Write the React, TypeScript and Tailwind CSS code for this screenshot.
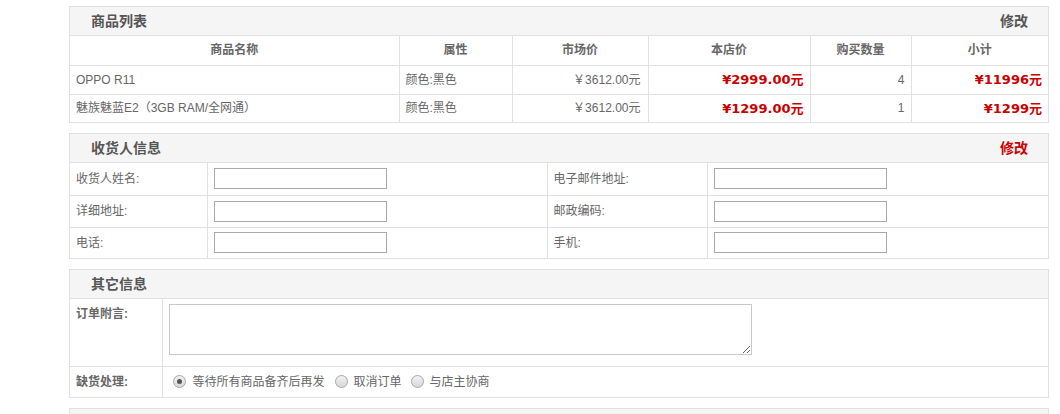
import React from "react";

const font = { fontFamily: '"Liberation Sans", Arial, "Noto Sans CJK SC", sans-serif' };
const priceFont = { fontFamily: '"DejaVu Sans", Verdana, "Noto Sans CJK SC", sans-serif' };

const items = [
  { name: "OPPO R11", attr: "颜色:黑色", market: "￥3612.00元", price: "¥2999.00元", qty: 4, total: "¥11996元" },
  { name: "魅族魅蓝E2（3GB RAM/全网通）", attr: "颜色:黑色", market: "￥3612.00元", price: "¥1299.00元", qty: 1, total: "¥1299元" },
];

function SectionHead({ title, action, red }: { title: string; action?: string; red?: boolean }) {
  return (
    <div className="flex h-[29px] items-center justify-between border-b border-[#e0e0e0] bg-[#f5f5f5] pl-[21px] pr-[20px]">
      <span className="text-[14px] font-bold text-[#555]">{title}</span>
      {action && (
        <span className={`text-[14px] font-bold ${red ? "text-[#cc0000]" : "text-[#555]"}`}>{action}</span>
      )}
    </div>
  );
}

function Radio({ checked }: { checked?: boolean }) {
  return (
    <span className="inline-flex h-[13px] w-[13px] items-center justify-center rounded-full border border-[#a8a8a8] bg-gradient-to-b from-[#f2f2f2] to-[#d8d8d8]">
      {checked && <span className="h-[5px] w-[5px] rounded-full bg-[#555]" />}
    </span>
  );
}

const td = "border border-[#e0e0e0] px-[6px]";
const th = "border border-[#e0e0e0] h-[29px] font-bold text-center text-[#666]";

const contacts = [
  ["收货人姓名:", "电子邮件地址:"],
  ["详细地址:", "邮政编码:"],
  ["电话:", "手机:"],
];

export default function App() {
  return (
    <div className="min-h-screen bg-white pt-[6px] text-[12px] text-[#666]" style={font}>
      <div className="ml-[69px] w-[980px]">
        {/* 商品列表 */}
        <div className="border border-[#e0e0e0]">
          <SectionHead title="商品列表" action="修改" />
          <table className="w-full table-fixed border-collapse border-hidden">
            <colgroup>
              <col className="w-[329px]" />
              <col className="w-[113px]" />
              <col className="w-[136px]" />
              <col className="w-[162px]" />
              <col className="w-[101px]" />
              <col />
            </colgroup>
            <thead>
              <tr>
                <th className={th}>商品名称</th>
                <th className={th}>属性</th>
                <th className={th}>市场价</th>
                <th className={th}>本店价</th>
                <th className={th}>购买数量</th>
                <th className={th}>小计</th>
              </tr>
            </thead>
            <tbody>
              {items.map((it, i) => {
                const h = i === items.length - 1 ? "h-[28px]" : "h-[29px]";
                return (
                  <tr key={it.name}>
                    <td className={`${td} ${h} px-[4px]`}>{it.name}</td>
                    <td className={`${td} ${h} px-[4px]`}>{it.attr}</td>
                    <td className={`${td} ${h} pr-[7px] text-right`}>{it.market}</td>
                    <td className={`${td} ${h} text-right text-[13px] font-bold text-[#cc0000]`} style={priceFont}>{it.price}</td>
                    <td className={`${td} ${h} text-right`}>{it.qty}</td>
                    <td className={`${td} ${h} text-right text-[13px] font-bold text-[#cc0000]`} style={priceFont}>{it.total}</td>
                  </tr>
                );
              })}
            </tbody>
          </table>
        </div>

        {/* 收货人信息 */}
        <div className="mt-[10px] border border-[#e0e0e0]">
          <SectionHead title="收货人信息" action="修改" red />
          <table className="w-full table-fixed border-collapse border-hidden">
            <colgroup>
              <col className="w-[137px]" />
              <col className="w-[340px]" />
              <col className="w-[160px]" />
              <col />
            </colgroup>
            <tbody>
              {contacts.map(([a, b], i) => {
                const h = i === contacts.length - 1 ? "h-[31px]" : "h-[32px]";
                return (
                  <tr key={a}>
                    <td className={`${td} ${h} px-[4px]`}>{a}</td>
                    <td className={`${td} ${h} px-[4px]`}>
                      <input className="block h-[21px] w-[173px] border border-[#a9a9a9] bg-white" />
                    </td>
                    <td className={`${td} ${h} px-[5px]`}>{b}</td>
                    <td className={`${td} ${h} px-[4px]`}>
                      <input className="block h-[21px] w-[173px] border border-[#a9a9a9] bg-white" />
                    </td>
                  </tr>
                );
              })}
            </tbody>
          </table>
        </div>

        {/* 其它信息 */}
        <div className="mt-[10px] border border-[#e0e0e0]">
          <SectionHead title="其它信息" />
          <table className="w-full table-fixed border-collapse border-hidden">
            <colgroup>
              <col className="w-[92px]" />
              <col />
            </colgroup>
            <tbody>
              <tr>
                <td className={`${td} h-[67px] px-[4px] pt-[6px] align-top font-bold`}>订单附言:</td>
                <td className={`${td} h-[67px] px-[5px] pt-[5px] align-top`}>
                  <textarea className="block h-[51px] w-[583px] resize border border-[#c8c8c8] bg-white" />
                </td>
              </tr>
              <tr>
                <td className={`${td} h-[31px] px-[4px] font-bold`}>缺货处理:</td>
                <td className={`${td} h-[31px] px-[5px]`}>
                  <div className="flex items-center">
                    <span className="ml-[4px] mr-[7px] flex"><Radio checked /></span>
                    <span>等待所有商品备齐后再发</span>
                    <span className="ml-[10px] mr-[6px] flex"><Radio /></span>
                    <span>取消订单</span>
                    <span className="ml-[9px] mr-[6px] flex"><Radio /></span>
                    <span>与店主协商</span>
                  </div>
                </td>
              </tr>
            </tbody>
          </table>
        </div>

        <div className="mt-[10px] border border-[#e0e0e0]">
          <SectionHead title="" />
        </div>
      </div>
    </div>
  );
}
